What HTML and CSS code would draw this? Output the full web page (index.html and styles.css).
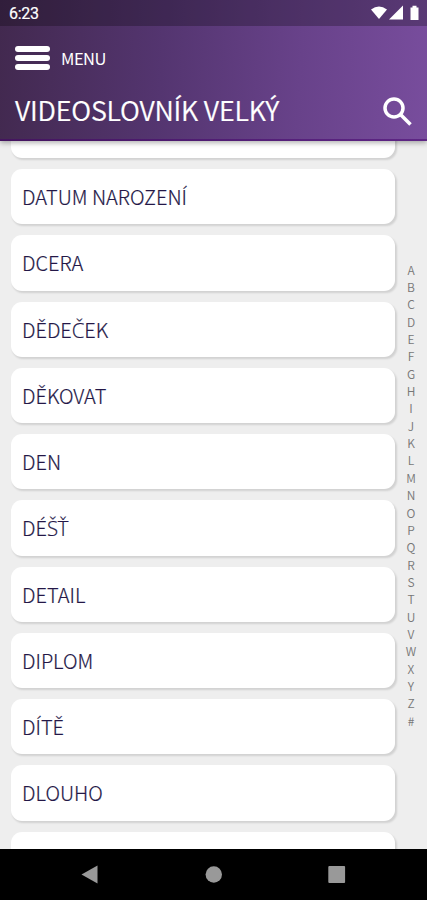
FILE: index.html
```html
<!DOCTYPE html>
<html lang="cs">
<head>
<meta charset="utf-8">
<title>Videoslovník velký</title>
<link rel="stylesheet" href="styles.css">
</head>
<body>
<header class="header">
  <div class="status">
    <span class="clock">6:23</span>
    <svg class="status-icons" width="50" height="16" viewBox="0 0 50 16">
      <path d="M1 4.500Q9 -1.500 17 4.500L9 14Z"/>
      <path d="M33 0.500V14.500H19Z"/>
      <path d="M40.500 2.500H42.500V0.800H46.500V2.500H48.500V15H40.500Z"/>
    </svg>
  </div>
  <div class="menu">
    <div class="burger"><i></i><i></i><i></i></div>
    <span class="menu-label">MENU</span>
  </div>
  <div class="title-row">
    <h1 class="title">VIDEOSLOVNÍK VELKÝ</h1>
    <svg class="search" width="30" height="30" viewBox="0 0 30 30">
      <circle cx="12" cy="12" r="9"/>
      <path d="M18.500 18.500L28.500 28.500"/>
    </svg>
  </div>
</header>
<main class="content">
  <ul class="words">
    <li class="card"></li>
    <li class="card">DATUM NAROZENÍ</li>
    <li class="card">DCERA</li>
    <li class="card">DĚDE<span class="caron">Č</span>EK</li>
    <li class="card">DĚKOVAT</li>
    <li class="card">DEN</li>
    <li class="card">DÉ<span class="caron">ŠŤ</span></li>
    <li class="card">DETAIL</li>
    <li class="card">DIPLOM</li>
    <li class="card">DÍTĚ</li>
    <li class="card">DLOUHO</li>
    <li class="card"></li>
  </ul>
  <nav class="index">
    <span>A</span><span>B</span><span>C</span><span>D</span><span>E</span><span>F</span><span>G</span><span>H</span><span>I</span><span>J</span><span>K</span><span>L</span><span>M</span><span>N</span><span>O</span><span>P</span><span>Q</span><span>R</span><span>S</span><span>T</span><span>U</span><span>V</span><span>W</span><span>X</span><span>Y</span><span>Z</span><span>#</span>
  </nav>
</main>
<footer class="navbar">
  <svg width="427" height="51" viewBox="0 0 427 51">
    <path d="M81.500 25.500L97.500 16.500V34.500Z"/>
    <circle cx="213.800" cy="25.500" r="8.200"/>
    <rect x="328.300" y="17" width="16.800" height="17" rx="1"/>
  </svg>
</footer>
</body>
</html>
```
FILE: styles.css
```css
* { box-sizing: border-box; }
body {
  margin: 0;
  width: 427px;
  height: 900px;
  overflow: hidden;
  display: flex;
  flex-direction: column;
  background: #eee;
  font-family: "Noto Sans CJK JP", "Noto Sans", sans-serif;
}
.header {
  flex: none;
  height: 141px;
  color: #fff;
  background: linear-gradient(93deg, #42294f 0%, #543570 38%, #68428a 70%, #784d9d 100%);
  border-bottom: 2px solid rgba(70, 0, 110, .5);
  box-shadow: 0 2px 5px rgba(0, 0, 0, .3);
  position: relative;
  z-index: 1;
}
.status {
  height: 26px;
  padding: 0 7px 0 9px;
  display: flex;
  justify-content: space-between;
  align-items: center;
  background: rgba(0, 0, 0, .25);
}
.clock { font: 400 16px/26px Roboto, sans-serif; padding-top: 2px; letter-spacing: -.3px; -webkit-text-stroke: .2px #fff; }
.status-icons { fill: #fff; }
.menu {
  height: 64px;
  padding-left: 15px;
  display: flex;
  align-items: center;
  gap: 11px;
}
.burger { width: 35px; display: flex; flex-direction: column; gap: 3px; }
.burger i { height: 5.700px; border-radius: 3px; background: #fff; }
.menu-label { font-size: 16.500px; line-height: 24px; letter-spacing: -.5px; }
.title-row {
  height: 42px;
  padding: 0 15px 0 15px;
  display: flex;
  align-items: center;
  justify-content: space-between;
}
.title { margin: -2px 0 0; font-size: 26.900px; line-height: 42px; font-weight: 350; letter-spacing: -.2px; white-space: nowrap; -webkit-text-stroke: .2px #fff; }
.search { fill: none; stroke: #fff; stroke-width: 3.500px; }
.content {
  flex: 1;
  min-height: 0;
  overflow: hidden;
  display: flex;
  justify-content: space-between;
}
.words {
  list-style: none;
  margin: -38px 0 0;
  padding: 0 0 0 11px;
  width: 395px;
}
.card {
  height: 55.200px;
  margin-bottom: 11.050px;
  padding-left: 11px;
  border-radius: 11px;
  background: #fff;
  box-shadow: 1.500px 2px 2px rgba(0, 0, 0, .12);
  color: #241747;
  font-size: 20px;
  font-weight: 300;
  line-height: 56px;
  -webkit-text-stroke: .2px #241747;
}
.caron { font-family: "Open Sans", sans-serif; font-size: 20.400px; line-height: 1; letter-spacing: -.3px; }
.index {
  width: 32px;
  padding-top: 119.500px;
  display: flex;
  flex-direction: column;
  align-items: center;
  color: #777;
  font-size: 12px;
  font-weight: 350;
  line-height: 17.370px;
}
.index span { height: 17.370px; }
.navbar { flex: none; height: 51px; background: #000; }
.navbar svg { display: block; fill: #999; }
```
